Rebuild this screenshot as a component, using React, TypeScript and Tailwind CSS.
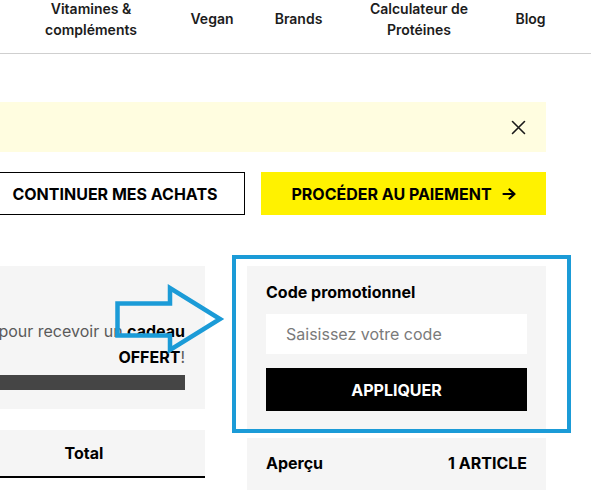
import React from "react";

function XIcon() {
  return (
    <svg width="15" height="15" viewBox="0 0 15 15" fill="none" stroke="#1a1a1a" strokeWidth="1.6" strokeLinecap="round">
      <path d="M1.5 1.5 L13.5 13.5 M13.5 1.5 L1.5 13.5" />
    </svg>
  );
}

function ArrowRight() {
  return (
    <svg width="14" height="12" viewBox="0 0 14 12" fill="none" stroke="#000" strokeWidth="2.2" strokeLinecap="round" strokeLinejoin="round">
      <path d="M1.5 6 H12.5 M7.5 1.5 L12.5 6 L7.5 10.5" />
    </svg>
  );
}

function NavItem({ ml, w, children }: { ml: string; w: string; children: React.ReactNode }) {
  return (
    <div className={`${ml} ${w} shrink-0 flex justify-center`}>
      <div className="text-center whitespace-nowrap">{children}</div>
    </div>
  );
}

export default function App() {
  return (
    <div className="relative w-[591px] h-[490px] overflow-hidden bg-white font-[Inter,sans-serif] text-[#111]">
      {/* Header nav */}
      <header className="h-[54px] border-b border-[#cfcfcf]">
        <nav className="flex h-[37px] items-center text-[14px] leading-[21px] font-semibold text-[#1c1c1c]">
          <NavItem ml="ml-[45px]" w="w-[92px]">
            Vitamines &amp;
            <br />
            compléments
          </NavItem>
          <NavItem ml="ml-[54px]" w="w-[42px]">Vegan</NavItem>
          <NavItem ml="ml-[41px]" w="w-[49px]">Brands</NavItem>
          <NavItem ml="ml-[45px]" w="w-[102px]">
            Calculateur de
            <br />
            Protéines
          </NavItem>
          <NavItem ml="ml-[46px]" w="w-[29px]">Blog</NavItem>
        </nav>
      </header>

      {/* Notice banner */}
      <div className="mt-[48px] w-[546px] h-[50px] bg-[#fffde0] flex items-center justify-end pr-[20px]">
        <XIcon />
      </div>

      {/* Action buttons */}
      <div className="mt-[20px] w-[546px] flex justify-end gap-[16px]">
        <button className="shrink-0 w-[260px] h-[43px] border-[1.5px] border-black bg-white flex items-center justify-center text-[16px] font-bold text-black">
          CONTINUER MES ACHATS
        </button>
        <button className="shrink-0 w-[285px] h-[43px] bg-[#fff200] flex items-center justify-center gap-[10px] text-[16px] font-bold text-black">
          <span>PROCÉDER AU PAIEMENT</span>
          <ArrowRight />
        </button>
      </div>

      {/* Main two columns */}
      <div className="mt-[51px] w-[546px] flex justify-end gap-[42px]">
        {/* Left column */}
        <div className="shrink-0 w-[300px]">
          <div className="h-[143px] bg-[#f5f5f5] pt-[52px] pr-[20px]">
            <div className="flex justify-end text-[16px] leading-[26px] whitespace-nowrap">
              <span className="shrink-0 text-[#5a5a5a]">
                Ajoutez encore 30,00 € pour recevoir un <b className="font-bold text-black">cadeau</b>
              </span>
            </div>
            <div className="flex justify-end text-[16px] leading-[26px] whitespace-nowrap">
              <span className="shrink-0 text-[#5a5a5a]">
                <b className="font-bold text-black">OFFERT</b>!
              </span>
            </div>
            <div className="mt-[5px] h-[15px] bg-[#454545]" />
          </div>
          <div className="mt-[21px] h-[48px] bg-[#f5f5f5] border-b-2 border-black flex justify-end">
            <div className="w-[242px] flex items-center justify-center text-[16px] font-bold text-black">
              Total
            </div>
          </div>
        </div>

        {/* Right column */}
        <div className="shrink-0 w-[299px]">
          <div className="bg-[#f5f5f5] pt-[16px] px-[19px] pb-[18px]">
            <div className="text-[16px] leading-[20px] font-bold text-black">Code promotionnel</div>
            <input
              className="mt-[12px] block w-full h-[40px] bg-white pl-[20px] text-[16px] outline-none placeholder:text-[#7a7a7a]"
              placeholder="Saisissez votre code"
            />
            <button className="mt-[14px] w-full h-[43px] bg-black text-white text-[16px] font-bold flex items-center justify-center">
              APPLIQUER
            </button>
          </div>
          <div className="mt-[9px] h-[80px] bg-[#f5f5f5] px-[19px] pt-[15px]">
            <div className="flex justify-between text-[16px] leading-[20px] font-bold text-black">
              <span>Aperçu</span>
              <span>1 ARTICLE</span>
            </div>
          </div>
        </div>
      </div>

      {/* Annotation overlays */}
      <div className="absolute left-[232px] top-[255px] w-[339px] h-[178px] border-4 border-[#1b9bd7] pointer-events-none" />
      <svg className="absolute left-0 top-0 pointer-events-none" width="591" height="490" viewBox="0 0 591 490">
        <polygon
          points="117.5,303.5 170,303.5 170,288 220,319 170,350 170,335.5 117.5,335.5"
          fill="none"
          stroke="#1b9bd7"
          strokeWidth="4.5"
          strokeLinejoin="miter"
        />
      </svg>
    </div>
  );
}
